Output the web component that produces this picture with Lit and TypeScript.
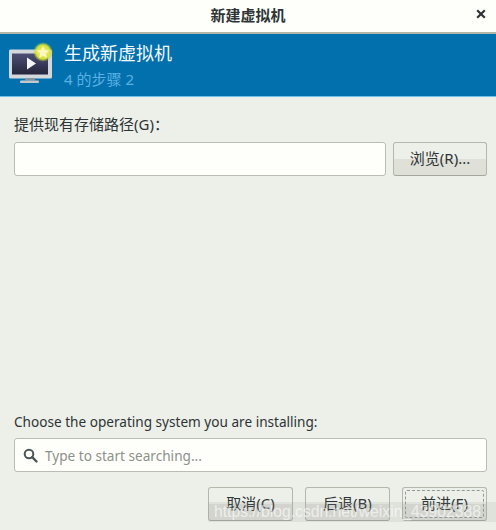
import { LitElement, html, css } from "lit";
import { customElement } from "lit/decorators.js";

@customElement("app-root")
export class AppRoot extends LitElement {
  static styles = css`
    :host {
      display: block;
      width: 496px;
      height: 530px;
      position: relative;
      overflow: hidden;
      background: #edf0e9;
      color: #2e3436;
      font-family: "Noto Sans", "Noto Sans CJK SC", sans-serif;
      font-size: 15px;
    }
    .window { display: flex; flex-direction: column; height: 530px; }
    .titlebar {
      height: 32px;
      box-sizing: content-box;
      flex: none;
      display: flex;
      align-items: center;
      justify-content: center;
      position: relative;
      background: #fefffa;
      font-weight: 700;
      font-size: 15px;
      border-bottom: 2px solid #b5b5aa;
    }
    .ttext { margin-top: -3px; }
    .close {
      position: absolute;
      right: 8px;
      top: 7px;
      width: 14px;
      height: 14px;
    }
    .header {
      height: 62px;
      flex: none;
      display: flex;
      align-items: center;
      gap: 10px;
      padding-left: 8px;
      background: #0370ae;
      border-bottom: 1px solid #6cc0ea;
    }
    .icon { width: 46px; height: 46px; flex: none; margin-top: -2px; }
    .htext { display: flex; flex-direction: column; gap: 4px; margin-top: -1px; }
    .htitle { color: #f4f9fb; font-size: 18px; line-height: 24px; }
    .hsub { color: #5ab0e2; font-size: 15px; line-height: 20px; }
    .body {
      flex: 1;
      display: flex;
      flex-direction: column;
      padding: 18px 9px 9px 14px;
    }
    .label { line-height: 18px; height: 18px; white-space: nowrap; }
    .latin { font-size: 13.6px; }
    .row { display: flex; gap: 7px; margin-top: 9px; }
    .entry {
      box-sizing: border-box;
      height: 34px;
      background: #fefffa;
      border: 1px solid #b9bdb4;
      border-radius: 3px;
      display: flex;
      align-items: center;
    }
    .grow { flex: 1; }
    .btn {
      box-sizing: border-box;
      height: 34px;
      padding-bottom: 3px;
      border: 1px solid #b3b7ac;
      border-bottom-color: #a3a79d;
      border-radius: 3px;
      background: linear-gradient(#edf0e9 0, #edf0e9 50%, #dfe1d9 50%, #dfe1d9 100%);
      display: flex;
      align-items: center;
      justify-content: center;
      color: #2e3436;
      position: relative;
    }
    .browse { width: 94px; }
    .spacer { flex: 1; }
    .search {
      margin-top: 7px;
      padding-left: 8px;
      gap: 7px;
      color: #8d918b;
      font-size: 13.6px;
    }
    .search svg { width: 15px; height: 15px; flex: none; }
    .actions { display: flex; justify-content: flex-end; gap: 12px; margin-top: 15px; }
    .action { width: 85px; }
    .focus::after {
      content: "";
      position: absolute;
      inset: 2px;
      border: 1px dashed #8c9a9c;
      border-radius: 2px;
    }
    .wm {
      position: absolute;
      left: 208px;
      top: 502px;
      width: 288px;
      height: 20px;
      background: rgba(150, 150, 150, 0.16);
      color: rgba(255, 255, 255, 0.62);
      font-family: "Liberation Sans", sans-serif;
      font-size: 15.7px;
      line-height: 20px;
      padding-left: 6px;
      box-sizing: border-box;
      white-space: nowrap;
      overflow: hidden;
    }
  `;

  render() {
    return html`
      <div class="window">
        <div class="titlebar">
          <span class="ttext">新建虚拟机</span>
          <svg class="close" viewBox="0 0 14 14">
            <path d="M3.2 3.2 L10.8 10.8 M10.8 3.2 L3.2 10.8" stroke="#2e3436" stroke-width="2.2" fill="none" />
          </svg>
        </div>
        <div class="header">
          <svg class="icon" viewBox="0 3 46 46">
            <defs>
              <linearGradient id="scr" x1="0" y1="0" x2="0" y2="1">
                <stop offset="0" stop-color="#4e4e76" />
                <stop offset="1" stop-color="#26263c" />
              </linearGradient>
              <radialGradient id="glow">
                <stop offset="0" stop-color="#f7f76a" />
                <stop offset="0.7" stop-color="#dde63a" stop-opacity="0.95" />
                <stop offset="1" stop-color="#a0c820" stop-opacity="0" />
              </radialGradient>
            </defs>
            <rect x="1" y="11.5" width="43" height="29" rx="1.5" fill="#d4d8dc" />
            <rect x="4" y="15.5" width="36" height="21" fill="url(#scr)" />
            <path d="M19 19.5 L19 31.5 L28 25.5 Z" fill="#f6f6f6" />
            <rect x="17" y="40.5" width="10" height="2" fill="#8d9094" />
            <rect x="12" y="42.5" width="19" height="2.5" rx="1" fill="#c4c8cb" />
            <circle cx="35" cy="14" r="10" fill="url(#glow)" />
            <path d="M35 8 L36.9 12.1 L41.2 12.6 L38 15.6 L38.9 20 L35 17.8 L31.1 20 L32 15.6 L28.8 12.6 L33.1 12.1 Z" fill="#fdf6c0" />
          </svg>
          <div class="htext">
            <div class="htitle">生成新虚拟机</div>
            <div class="hsub">4 的步骤 2</div>
          </div>
        </div>
        <div class="body">
          <div class="label">提供现有存储路径(G)：</div>
          <div class="row">
            <div class="entry grow"></div>
            <div class="btn browse">浏览(R)...</div>
          </div>
          <div class="spacer"></div>
          <div class="label latin">Choose the operating system you are installing:</div>
          <div class="entry search">
            <svg viewBox="0 0 15 15">
              <circle cx="6" cy="6" r="4.3" stroke="#4a5558" stroke-width="2" fill="none" />
              <path d="M9.2 9.2 L13.5 13.5" stroke="#4a5558" stroke-width="2.4" stroke-linecap="round" />
            </svg>
            <span>Type to start searching...</span>
          </div>
          <div class="actions">
            <div class="btn action">取消(C)</div>
            <div class="btn action">后退(B)</div>
            <div class="btn action focus">前进(F)</div>
          </div>
        </div>
      </div>
      <div class="wm">https://blog.csdn.net/weixin_43902388</div>
    `;
  }
}
